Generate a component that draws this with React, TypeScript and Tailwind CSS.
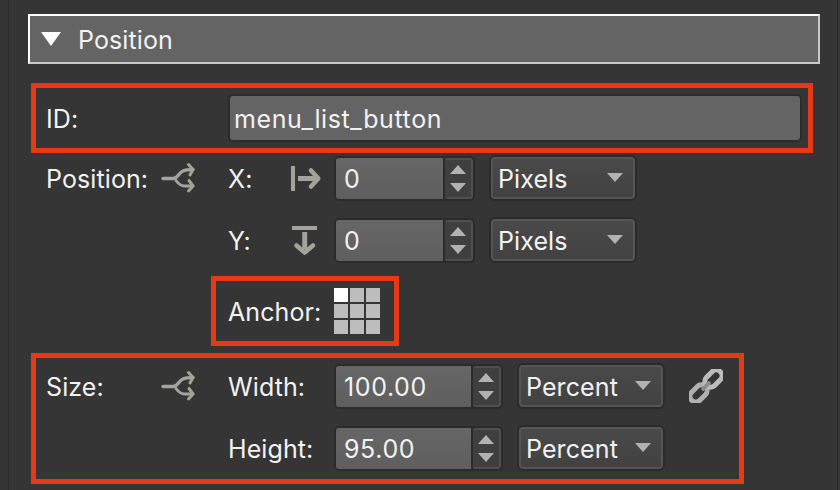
import React from 'react';

const SplitIcon = () => (
  <svg width="34" height="32" viewBox="0 0 34 32" fill="none" stroke="#a3a39b" strokeWidth="3" strokeLinejoin="round" strokeLinecap="round">
    <path d="M2 16.500h10c2.500 0 4-1.500 5.500-3.500 2.500-3.500 4.500-5.500 14.500-5.500" strokeWidth="3.400" />
    <path d="M27.500 2.500 32 7.500l-3 5.500" />
    <path d="M15 18.500c2.500 3.500 4.500 5.500 8.500 5.500H32" />
    <path d="M28 18.500 32 24l-4.500 5" />
  </svg>
);

const ArrowRightIcon = () => (
  <svg width="32" height="26" viewBox="0 0 32 26" fill="none" stroke="#a3a39b">
    <rect x="1.500" y="0.500" width="3" height="24" fill="#a3a39b" strokeWidth="1" />
    <path d="M8 12.500h18" strokeWidth="5" />
    <path d="M21 4.500 28.300 12.500 21 20.500" strokeWidth="4.600" strokeLinejoin="round" strokeLinecap="round" />
  </svg>
);

const ArrowDownIcon = () => (
  <svg width="26" height="30" viewBox="0 0 26 30" fill="none" stroke="#a3a39b">
    <rect x="0.500" y="0.500" width="24" height="3" fill="#a3a39b" strokeWidth="1" />
    <path d="M12.700 6v17" strokeWidth="5" />
    <path d="M4.500 19.500 12.700 26.500 21 19.500" strokeWidth="4.600" strokeLinejoin="round" strokeLinecap="round" />
  </svg>
);

const LinkIcon = () => (
  <svg width="34" height="34" viewBox="0 0 34 34" fill="none">
    <g transform="rotate(-45 17 17)">
      <rect x="-3.250" y="11.250" width="19.500" height="11.500" rx="5.750" stroke="#b0b0b0" strokeWidth="5" />
      <rect x="17.750" y="11.250" width="19.500" height="11.500" rx="5.750" stroke="#bcbcbc" strokeWidth="5" />
      <rect x="11" y="15" width="12" height="4" rx="2" fill="#8c8c8c" />
    </g>
  </svg>
);

const Caret = ({ up }: { up?: boolean }) => (
  <svg width="16" height="9" viewBox="0 0 16 9" fill="#b2b2b2">
    <polygon points={up ? '8,0 16,9 0,9' : '0,0 16,0 8,9'} />
  </svg>
);

const Spinner = ({ value, width }: { value: string; width: string }) => (
  <div className={`flex h-[45px] ${width} rounded-[5px] border-2 border-[#2b2b2b] overflow-hidden`}>
    <div className="flex-1 flex items-center pl-[8px] pt-[3px] tracking-[0.6px] bg-gradient-to-b from-[#666666] to-[#5f5f5f] border-r-2 border-[#2b2b2b]">
      {value}
    </div>
    <div className="w-[28px] flex flex-col items-center justify-center gap-[9px] bg-[#3f3f3f] border-2 border-l-0 border-[#4f4f4f] rounded-[3px]">
      <Caret up />
      <Caret />
    </div>
  </div>
);

const Select = ({ label, width }: { label: string; width: string }) => (
  <div className={`flex h-[46px] ${width} items-center justify-between pl-[7px] pr-[12px] rounded-[6px] border-2 border-[#2b2b2b] bg-gradient-to-b from-[#4a4a4a] to-[#414141] ring-2 ring-inset ring-[#555555]`}>
    <span className="pt-[3px]">{label}</span>
    <span className="pb-[1px]">
      <Caret />
    </span>
  </div>
);

export default function App() {
  return (
    <div className="relative w-[840px] h-[490px] bg-[#353535] text-[#f2f2f2] text-[25px] leading-none overflow-hidden font-['Inter',sans-serif] tracking-[0.1px]">
      {/* panel edges */}
      <div className="absolute left-[8px] top-0 bottom-0 w-px bg-[#2a2a2a]" />
      <div className="absolute right-[2px] top-0 bottom-0 w-px bg-[#2a2a2a]" />

      <div className="flex flex-col pl-[28px] pt-[14px]">
        {/* section header */}
        <div className="flex items-center w-[792px] h-[50px] border-2 border-t-white border-l-white border-r-[#c8c8c8] border-b-[#c8c8c8] bg-[#646464] pl-[11px]">
          <svg width="20" height="14" viewBox="0 0 20 14" fill="#ffffff">
            <polygon points="0,0 20,0 10,14" />
          </svg>
          <span className="ml-[17px] pt-[3px]">Position</span>
        </div>

        {/* ID */}
        <div className="flex items-center ml-[3px] mt-[19px] w-[782px] h-[70px] border-[5px] border-[#e63a17] pl-[10px] pr-[6px]">
          <span className="w-[182px] pt-[3px]">ID:</span>
          <div className="flex items-center flex-1 h-[48px] pl-[4px] pt-[3px] tracking-[0.6px] rounded-[5px] border-2 border-[#2b2b2b] bg-[#646464]">
            menu_list_button
          </div>
        </div>

        {/* Position X */}
        <div className="flex items-center ml-[18px] mt-[2px] h-[46px]">
          <span className="w-[115px] pt-[3px]">Position:</span>
          <span className="w-[67px]">
            <SplitIcon />
          </span>
          <span className="w-[62px] pt-[3px]">X:</span>
          <span className="w-[44px] pt-[1px]">
            <ArrowRightIcon />
          </span>
          <Spinner value="0" width="w-[141px]" />
          <div className="ml-[14px]">
            <Select label="Pixels" width="w-[148px]" />
          </div>
        </div>

        {/* Position Y */}
        <div className="flex items-center ml-[18px] mt-[16px] h-[46px]">
          <span className="w-[182px]" />
          <span className="w-[64px] pt-[3px]">Y:</span>
          <span className="w-[42px] pt-[2px]">
            <ArrowDownIcon />
          </span>
          <Spinner value="0" width="w-[141px]" />
          <div className="ml-[14px]">
            <Select label="Pixels" width="w-[148px]" />
          </div>
        </div>

        {/* Anchor */}
        <div className="flex items-center ml-[183px] mt-[13px] w-[188px] h-[70px] border-[5px] border-[#e63a17] pl-[12px]">
          <span className="w-[106px] pt-[3px]">Anchor:</span>
          <div className="grid grid-cols-[14px_14px_14px] grid-rows-[14px_14px_14px] gap-[2px]">
            <div className="bg-white" />
            {[1, 2, 3, 4, 5, 6, 7, 8].map((i) => (
              <div key={i} className="bg-[#bdbdbd]" />
            ))}
          </div>
        </div>

        {/* Size */}
        <div className="flex flex-col ml-[3px] mt-[7px] w-[713px] h-[131px] border-[5px] border-[#e63a17] pt-[5px] pl-[10px] gap-[16px]">
          <div className="flex items-center h-[46px]">
            <span className="w-[115px] pt-[3px]">Size:</span>
            <span className="w-[67px]">
              <SplitIcon />
            </span>
            <span className="w-[106px] pt-[3px]">Width:</span>
            <Spinner value="100.00" width="w-[169px]" />
            <div className="ml-[14px]">
              <Select label="Percent" width="w-[148px]" />
            </div>
            <span className="ml-[24px]">
              <LinkIcon />
            </span>
          </div>
          <div className="flex items-center h-[46px]">
            <span className="w-[182px]" />
            <span className="w-[106px] pt-[3px]">Height:</span>
            <Spinner value="95.00" width="w-[169px]" />
            <div className="ml-[14px]">
              <Select label="Percent" width="w-[148px]" />
            </div>
          </div>
        </div>
      </div>
    </div>
  );
}
